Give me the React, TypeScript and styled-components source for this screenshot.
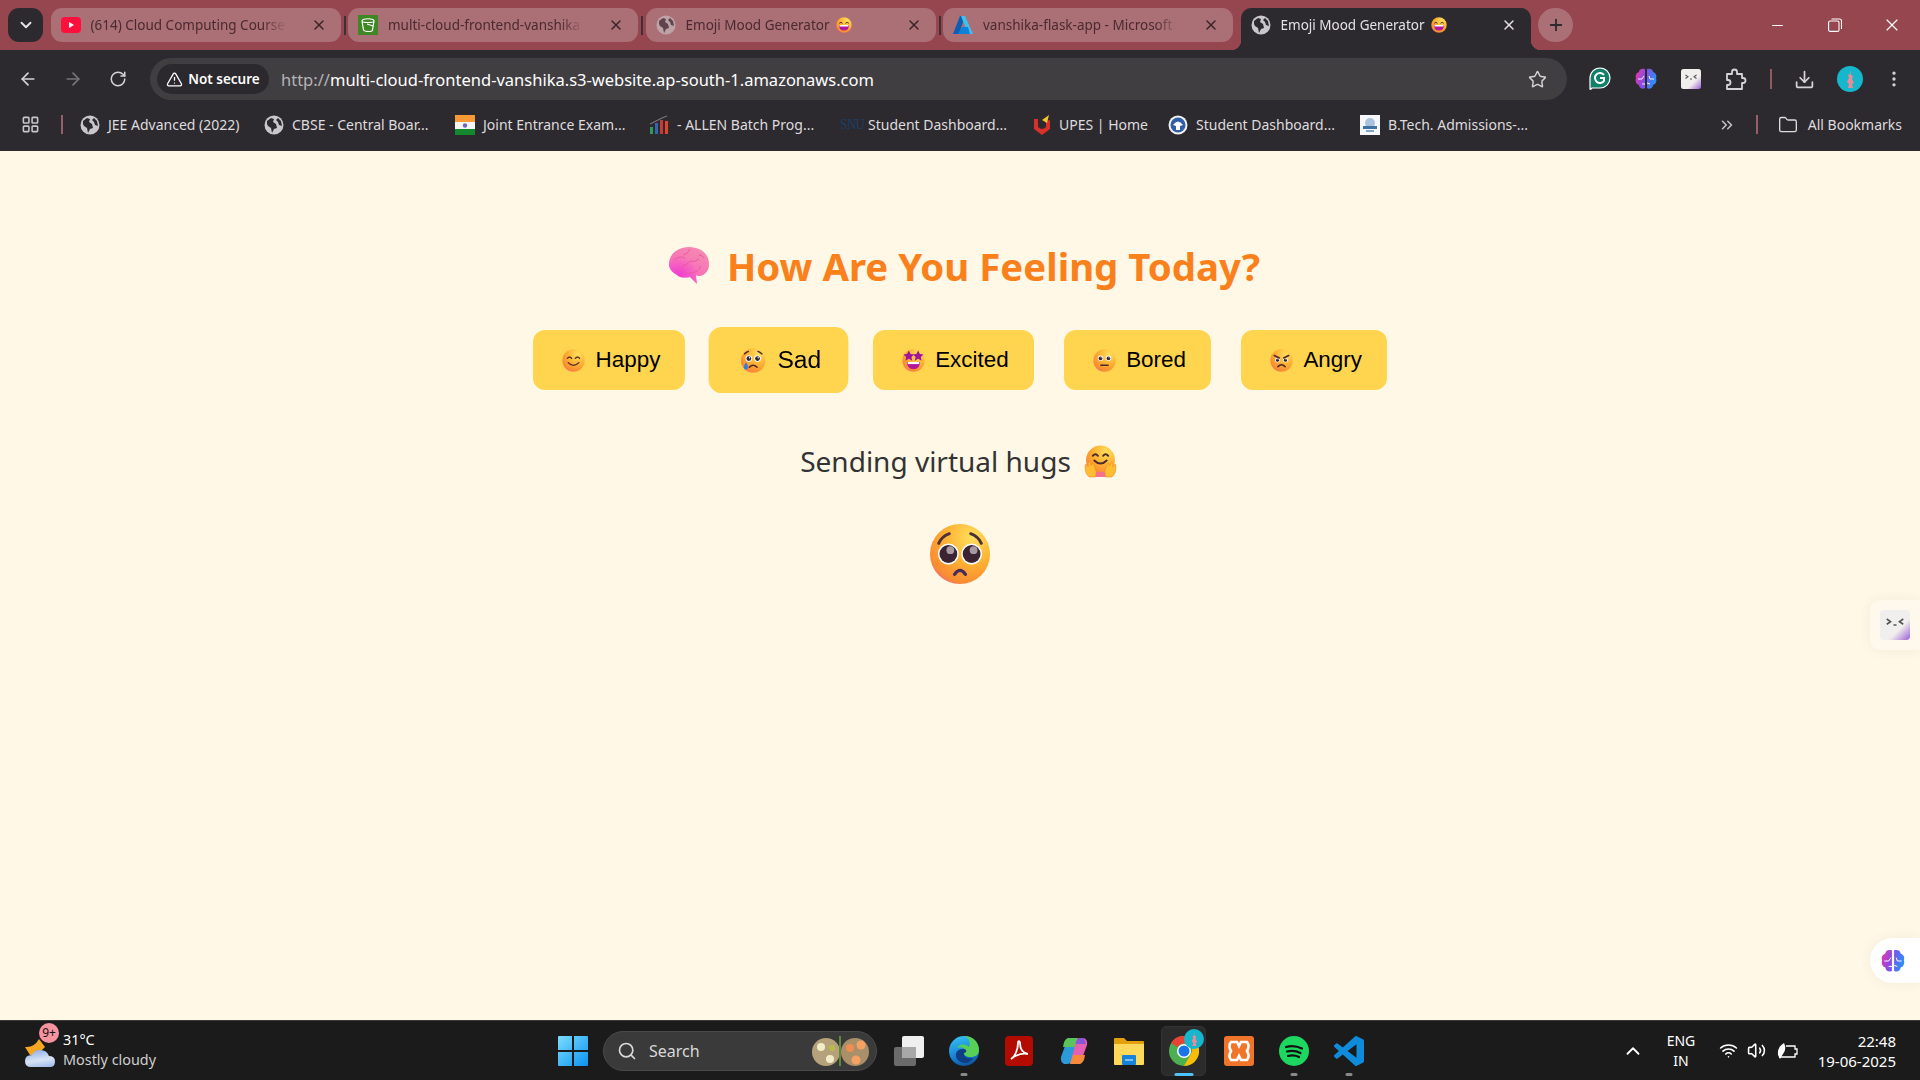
import {ReactNode, useId} from 'react';
import styled, {createGlobalStyle} from 'styled-components';
import {ArrowLeft, ArrowRight, ChevronDown, ChevronUp, ChevronsRight, Download, EllipsisVertical, Folder, LayoutGrid, Minus, Plus, RotateCw, Search, Star, TriangleAlert, Volume2, Wifi, X} from 'lucide-react';

const UI_FONT = '"Noto Sans", "Open Sans", sans-serif';

const GlobalStyle = createGlobalStyle`
  html, body {
    margin: 0;
    height: 100%;
    overflow: hidden;
    font-family: ${UI_FONT};
  }
  * { box-sizing: border-box; }
`;

type Mood = 'happy' | 'sad' | 'excited' | 'bored' | 'angry' | 'pleading' | 'hug' | 'grin';

const Emoji = ({mood, size}: {mood: Mood; size: number}) => {
  const id = useId();
  const eye = (x: number, y: number, r = 2.4) => (
    <>
      <circle cx={x} cy={y} r={r + 1.2} fill="#fff" />
      <circle cx={x} cy={y} r={r} fill="#33212e" />
      <circle cx={x + r * 0.3} cy={y - r * 0.35} r={r * 0.3} fill="#fff" />
    </>
  );
  return (
    <svg width={size} height={size} viewBox="0 0 32 32" style={{flexShrink: 0}}>
      <defs>
        <radialGradient id={id} cx="0.7" cy="0.22" r="0.92">
          <stop offset="0" stopColor="#ffdf5c" />
          <stop offset="0.5" stopColor="#fdb032" />
          <stop offset="0.85" stopColor="#f98a33" />
          <stop offset="1" stopColor="#ee5ca8" />
        </radialGradient>
      </defs>
      {mood === 'hug' && <circle cx="16" cy="14.500" r="14" fill={`url(#${id})`} />}
      {mood !== 'hug' && <circle cx="16" cy="16" r="15.500" fill={`url(#${id})`} />}
      {mood === 'happy' && (
        <g fill="none" stroke="#4b2a2a" strokeWidth="1.800" strokeLinecap="round">
          <path d="M7.500 13q3-3.500 6 0M18.500 13q3-3.500 6 0" />
          <path d="M8.500 19q7.500 7.500 15 0" />
        </g>
      )}
      {mood === 'grin' && (
        <>
          <path d="M7 12q3-3 5.500 0M19.500 12q3-3 5.500 0" fill="none" stroke="#4b2a2a" strokeWidth="2" strokeLinecap="round" />
          <path d="M6 16h20q0 11-10 11T6 16z" fill="#b4189c" />
          <path d="M7 16h18v3H7z" fill="#fff" />
        </>
      )}
      {mood === 'sad' && (
        <>
          {eye(10.500, 13.500, 3)}
          {eye(21.500, 13.500, 3)}
          <path d="M5 7.500q2.500-2 5-3M27 7.500q-2.500-2-5-3M11 24.500q5-5 10 0" fill="none" stroke="#4b2a2a" strokeWidth="1.800" strokeLinecap="round" />
          <path d="M7 18q3 4 2.500 8-4 3-5.500-1 0-3 3-7z" fill="#2f7fe0" />
        </>
      )}
      {mood === 'excited' && (
        <>
          <path d="M9.500 2l2.400 5 5 .6-3.700 3.400 1 5.200-4.700-2.600-4.700 2.600 1-5.200L2 7.600 7 7z" fill="#a3149d" />
          <path d="M22.500 2l2.400 5 5 .6-3.700 3.400 1 5.200-4.700-2.600-4.700 2.600 1-5.200L15 7.600 20 7z" fill="#a3149d" />
          <path d="M7 18h18q0 10-9 10T7 18z" fill="#b4189c" />
          <path d="M8 18h16v3H8z" fill="#fff" />
        </>
      )}
      {mood === 'bored' && (
        <>
          {eye(10.500, 13, 2.600)}
          {eye(21.500, 13, 2.600)}
          <path d="M11 22.500h10" stroke="#4b2a2a" strokeWidth="2" strokeLinecap="round" />
        </>
      )}
      {mood === 'angry' && (
        <>
          {eye(10.500, 15.500, 2.200)}
          {eye(21.500, 15.500, 2.200)}
          <path d="M6 9l7 3.500M26 9l-7 3.500M11 24.500q5-5 10 0" fill="none" stroke="#4b2a2a" strokeWidth="2.200" strokeLinecap="round" />
        </>
      )}
      {mood === 'pleading' && (
        <>
          <path d="M5 10.500q1.500-3.500 5.500-5M27 10.500q-1.500-3.500-5.500-5" fill="none" stroke="#4b3038" strokeWidth="1.500" strokeLinecap="round" />
          <circle cx="10" cy="16" r="5.400" fill="#fff" />
          <circle cx="22" cy="16" r="5.400" fill="#fff" />
          <circle cx="10" cy="16" r="4.600" fill="#3a2433" />
          <circle cx="22" cy="16" r="4.600" fill="#3a2433" />
          <circle cx="11" cy="14" r="2" fill="#a79aa0" />
          <circle cx="23" cy="14" r="2" fill="#a79aa0" />
          <path d="M13.200 26.500q2.800-4 5.600 0" fill="none" stroke="#4a2a5a" strokeWidth="1.700" strokeLinecap="round" />
        </>
      )}
      {mood === 'hug' && (
        <>
          <path d="M8.500 10.500q2.500-3 5 0M18.500 10.500q2.500-3 5 0M10 15q6 6 12 0" fill="none" stroke="#4b2a2a" strokeWidth="1.800" strokeLinecap="round" />
          <path d="M11 26h10v5H11z" fill="#f6708f" />
          <path d="M1 21q0-3 1.500-2l1.500 2V17q1.500-1 2 0l1 3 1-2q1.500 0 1.500 1L12 26l-1 5H5q-4-3-4-10zM31 21q0-3-1.500-2L28 21v-4q-1.500-1-2 0l-1 3-1-2q-1.500 0-1.500 1L20 26l1 5h6q4-3 4-10z" fill="#ffbd33" stroke="#f08a2c" strokeWidth="0.600" />
        </>
      )}
    </svg>
  );
};

const BRAIN_PATH =
  'M1 19C0 8 9 0 21 0c12 0 20 7 20 17 0 7-4 11-9 12-1 0-3 0-4-1l1 9-7-7c-5 1-10 1-13-2-4-2-7-5-8-9z';

const BrainEmoji = () => {
  const id = useId();
  const shade = useId();
  return (
    <svg width="42" height="38" viewBox="0 0 42 38" style={{flexShrink: 0}}>
      <defs>
        <linearGradient id={id} x1="0.7" y1="0" x2="0.2" y2="1">
          <stop offset="0" stopColor="#f58ab0" />
          <stop offset="0.6" stopColor="#f870b8" />
          <stop offset="1" stopColor="#f54cd0" />
        </linearGradient>
        <radialGradient id={shade} cx="0.25" cy="0.75" r="0.5">
          <stop offset="0" stopColor="#f038d8" stopOpacity="0.8" />
          <stop offset="1" stopColor="#f038d8" stopOpacity="0" />
        </radialGradient>
      </defs>
      <path d={BRAIN_PATH} fill={`url(#${id})`} />
      <path d={BRAIN_PATH} fill={`url(#${shade})`} />
      <path d="M6 13q6-5 11-2M22 2q-2 5-7 6M31 12q-5 4-9 2-3 4-8 5M13 20q1 6 9 6 8 0 11-7M36 11q-2-3-5-3" fill="none" stroke="#e4589c" strokeWidth="0.900" />
    </svg>
  );
};

const Globe = ({size = 20, base = '#c9c7ca', land = '#2d2a2f'}: {size?: number; base?: string; land?: string}) => (
  <svg width={size} height={size} viewBox="0 0 20 20" style={{flexShrink: 0}}>
    <circle cx="10" cy="10" r="9.500" fill={base} />
    <path d="M3 6l4-3 3 1-1 3 3 2 1 4-3 1-2 4-1-5-3-2-1-2zM14 3l3 3 1 5-3-1-1-3-2-2z" fill={land} />
  </svg>
);

const YouTubeIcon = () => (
  <svg width="20" height="16" viewBox="0 0 20 16" style={{flexShrink: 0}}>
    <rect width="20" height="16" rx="4" fill="#ff0f3c" />
    <path d="M8 5l5 3-5 3z" fill="#fff" />
  </svg>
);

const BucketIcon = () => (
  <svg width="20" height="20" viewBox="0 0 20 20" style={{flexShrink: 0}}>
    <rect width="20" height="20" fill="#3f8624" />
    <path d="M4 6c0-3 12-3 12 0l-1.500 9c0 2-7.500 2-9 0zM4 6c0 2 12 2 12 0M9 9l6 2" fill="none" stroke="#fff" strokeWidth="1.200" />
  </svg>
);

const AzureIcon = () => (
  <svg width="20" height="20" viewBox="0 0 20 20" style={{flexShrink: 0}}>
    <path d="M7 1h5L6 19H0z" fill="#0a5fb4" />
    <path d="M12 1h-4l7 18h5z" fill="#3cc1f0" />
    <path d="M9 12h6l2 7H5z" fill="#1081d8" />
  </svg>
);

const IndiaFlag = () => (
  <svg width="20" height="20" viewBox="0 0 20 20" style={{flexShrink: 0}}>
    <rect width="20" height="7" fill="#f79a36" />
    <rect y="7" width="20" height="7" fill="#f4f4f4" />
    <rect y="14" width="20" height="6" fill="#14882e" />
    <circle cx="10" cy="10.500" r="2.200" fill="#6b6bb5" />
  </svg>
);

const AllenIcon = () => (
  <svg width="20" height="20" viewBox="0 0 20 20" style={{flexShrink: 0}}>
    <path d="M1 12h3v7H1z" fill="#2d9c57" />
    <path d="M6 8h3v11H6z" fill="#3466b0" />
    <path d="M11 5h3v14h-3z" fill="#c73a3a" />
    <path d="M16 6h3v13h-3z" fill="#e0452c" />
    <path d="M1 9l12-6 5-2" stroke="#777" strokeWidth="1.200" fill="none" />
  </svg>
);

const UpesIcon = () => (
  <svg width="18" height="20" viewBox="0 0 18 20" style={{flexShrink: 0}}>
    <path d="M1 4h4v8q4 4 8 0V6l4-1v9l-8 6-8-6z" fill="#d9302c" />
    <path d="M9 5l7-5-2 8z" fill="#f5c32c" />
  </svg>
);

const CollegeIcon = () => (
  <svg width="20" height="20" viewBox="0 0 20 20" style={{flexShrink: 0}}>
    <circle cx="10" cy="10" r="9.500" fill="#f2f2ee" />
    <circle cx="10" cy="10" r="7.500" fill="#2f5fa8" />
    <path d="M5 10q5-7 10 0l-3 1v4H8v-4z" fill="#fff" />
  </svg>
);

const AdmissionIcon = () => (
  <svg width="20" height="20" viewBox="0 0 20 20" style={{flexShrink: 0}}>
    <rect width="20" height="20" fill="#f6f8fb" />
    <circle cx="10" cy="8" r="5" fill="#a9c3de" />
    <path d="M3 11h14v3H3z" fill="#3f73a8" />
    <path d="M6 15h8v2H6z" fill="#7fa5c9" />
  </svg>
);

const GrammarlyIcon = () => (
  <svg width="22" height="24" viewBox="0 0 22 24">
    <path d="M11 1a10 10 0 0 1 10 10 10 10 0 0 1-10 10H3q-2 2-2 1V11A10 10 0 0 1 11 1z" fill="#11806a" stroke="#fff" strokeWidth="1.200" />
    <path d="M15 8a5 5 0 1 0 0 6v-3h-4" fill="none" stroke="#fff" strokeWidth="2" />
  </svg>
);

const ColorBrain = ({size = 20}: {size?: number}) => {
  const id = useId();
  return (
    <svg width={size} height={size} viewBox="0 0 24 24">
      <defs>
        <linearGradient id={id} x1="0" x2="1" y1="0" y2="0.300">
          <stop offset="0" stopColor="#f0359c" />
          <stop offset="0.5" stopColor="#8b4bea" />
          <stop offset="1" stopColor="#2f8df5" />
        </linearGradient>
      </defs>
      <path d="M11 2C7 1 5 3 5 5 2 6 1 9 2 11c-1 3 0 6 3 7 0 3 4 5 6 3zM13 2c4-1 6 1 6 3 3 1 4 4 3 6 1 3 0 6-3 7 0 3-4 5-6 3z" fill={`url(#${id})`} />
      <path d="M4 12h4l2-3M20 12h-4l-1-3M8 17h3M16 17l-3-1" fill="none" stroke="#fff" strokeWidth="0.900" />
    </svg>
  );
};

const FaceIcon = ({size = 20}: {size?: number}) => {
  const id = useId();
  return (
    <svg width={size} height={size} viewBox="0 0 20 20">
      <defs>
        <linearGradient id={id} x1="0.2" y1="0.2" x2="1" y2="1">
          <stop offset="0.55" stopColor="#f1efed" />
          <stop offset="1" stopColor="#9c5fd6" />
        </linearGradient>
      </defs>
      <rect width="20" height="20" rx="2.500" fill={`url(#${id})`} />
      <path d="M4.500 6l2.500 1.800-2.500 1.700M15.500 6L13 7.800l2.500 1.700M9 10h2" fill="none" stroke="#555" strokeWidth="1.100" />
    </svg>
  );
};

const PuzzleIcon = () => (
  <svg width="22" height="24" viewBox="0 0 22 24">
    <path d="M2 7h5V5a2.500 2.500 0 0 1 5 0v2h5v4h1a2.500 2.500 0 0 1 0 5h-1v6H2v-4h1a2.500 2.500 0 0 0 0-5H2z" fill="none" stroke="#d6d3d6" strokeWidth="1.800" strokeLinejoin="round" />
  </svg>
);

const RestoreIcon = () => (
  <svg width="14" height="14" viewBox="0 0 14 14">
    <rect x="0.600" y="3" width="10.400" height="10.400" rx="1.500" fill="none" stroke="currentColor" strokeWidth="1.100" />
    <path d="M3.500 1h8q2 0 2 2v8" fill="none" stroke="currentColor" strokeWidth="1.100" />
  </svg>
);

const Avatar = ({size = 26}: {size?: number}) => (
  <svg width={size} height={size} viewBox="0 0 26 26">
    <circle cx="13" cy="13" r="13" fill="#16b6cc" />
    <path d="M13 4l1 5 2 1-1 3 2 4-2 1 1 4h-5l1-4-2-2 2-4-1-3 2-1z" fill="#ee8a96" />
  </svg>
);

const StartIcon = () => {
  const id = useId();
  return (
    <svg width="30" height="30" viewBox="0 0 30 30">
      <defs>
        <linearGradient id={id} x1="0" y1="0" x2="1" y2="1">
          <stop offset="0" stopColor="#7ddcff" />
          <stop offset="1" stopColor="#0a94f0" />
        </linearGradient>
      </defs>
      <path d="M0 1q0-1 1-1h13v14H0zM16 0h13q1 0 1 1v13H16zM0 16h14v14H1q-1 0-1-1zM16 16h14v13q0 1-1 1H16z" fill={`url(#${id})`} />
    </svg>
  );
};

const TaskViewIcon = () => (
  <svg width="30" height="30" viewBox="0 0 30 30">
    <rect x="0" y="11" width="22" height="19" rx="2" fill="#6b6b6b" />
    <rect x="8" y="0" width="22" height="22" rx="2" fill="#f0f0f0" />
    <rect x="8" y="11" width="14" height="11" fill="#a8a8a8" />
  </svg>
);

const EdgeIcon = () => {
  const id = useId();
  return (
    <svg width="30" height="32" viewBox="0 0 30 32">
      <defs>
        <linearGradient id={id} x1="0.2" y1="0" x2="0.5" y2="1">
          <stop offset="0" stopColor="#35c1f1" />
          <stop offset="0.6" stopColor="#1a84d8" />
          <stop offset="1" stopColor="#0c59a4" />
        </linearGradient>
      </defs>
      <circle cx="15" cy="16" r="15" fill={`url(#${id})`} />
      <path d="M15 1c9 0 15 6 15 14 0 5-4 7-8 7-5 0-7-2-7-4 0-1 1-2 2-2-1-3-5-5-9-3C10 9 16 8 20 12 22 7 20 3 15 1z" fill="#58d058" />
      <path d="M8 24c-3-5 0-11 7-10 4 1 2 4 0 4-1 3 3 6 9 5-3 6-11 7-16 1z" fill="#0f3f82" />
    </svg>
  );
};

const AcrobatIcon = () => (
  <svg width="28" height="30" viewBox="0 0 28 30">
    <rect width="28" height="30" rx="4" fill="#b30b00" />
    <path d="M6 23c4-2 7-10 7-16 0-3 2-2 2 0 0 6 3 10 8 11-5-1-12 1-17 5z" fill="none" stroke="#fff" strokeWidth="1.800" />
  </svg>
);

const CopilotIcon = () => (
  <svg width="30" height="30" viewBox="0 0 30 30">
    <path d="M9 2h10l-6 22q-1 4-5 4H5q-4-2-3-7z" fill="#2a9bd8" />
    <path d="M9 2h10l-3 9H4q1-8 5-9z" fill="#5bc45a" />
    <path d="M21 28H11l6-22q1-4 5-4h3q4 2 3 7z" fill="#e65fb4" />
    <path d="M21 28H11l3-9h12q-1 8-5 9z" fill="#f78a3a" />
    <path d="M17 6q1-4 5-4h3l2 6H17z" fill="#8a55d8" />
  </svg>
);

const FilesIcon = () => (
  <svg width="30" height="30" viewBox="0 0 30 30">
    <path d="M0 3q0-1 1-1h9l3 3h16q1 0 1 1v6H0z" fill="#e2a00d" />
    <path d="M0 8h30v20q0 1-1 1H1q-1 0-1-1z" fill="#ffd85c" />
    <rect x="8" y="19" width="14" height="10" rx="1" fill="#1683d8" />
    <path d="M11 24h8" stroke="#9fd4fb" strokeWidth="1.500" />
  </svg>
);

const ChromeIcon = () => (
  <svg width="30" height="30" viewBox="0 0 30 30">
    <circle cx="15" cy="15" r="15" fill="#4caf50" />
    <path d="M15 0a15 15 0 0 1 13 7.500H15a7.500 7.500 0 0 0-6.500 3.750L2 7A15 15 0 0 1 15 0z" fill="#ea4335" />
    <path d="M28 7.500A15 15 0 0 1 15 30l6.500-11.250A7.500 7.500 0 0 0 22 10z" fill="#fbbc05" />
    <circle cx="15" cy="15" r="7" fill="#fff" />
    <circle cx="15" cy="15" r="5.500" fill="#1a73e8" />
  </svg>
);

const XamppIcon = () => (
  <svg width="30" height="30" viewBox="0 0 30 30">
    <rect width="30" height="30" rx="3" fill="#f0742a" />
    <path d="M7 6h6l2 4 2-4h6q3 4 0 9 3 5 0 9h-6l-2-4-2 4H7q-3-4 0-9-3-5 0-9z" fill="none" stroke="#fff" strokeWidth="2.600" />
  </svg>
);

const SpotifyIcon = () => (
  <svg width="30" height="30" viewBox="0 0 30 30">
    <circle cx="15" cy="15" r="15" fill="#1ed760" />
    <path d="M7 11q8-2.500 16 1.500M8 15.500q7-2 13.500 1.500M9 20q6-1.500 11 1" fill="none" stroke="#121212" strokeWidth="2.200" strokeLinecap="round" />
  </svg>
);

const VsCodeIcon = () => (
  <svg width="30" height="30" viewBox="0 0 100 100">
    <path
      fillRule="evenodd"
      fill="#0f8bdc"
      d="M70.900 99.300a6.200 6.200 0 0 0 5-.2l20.600-9.900A6.200 6.200 0 0 0 100 83.600V16.400a6.200 6.200 0 0 0-3.500-5.600L75.900.9a6.200 6.200 0 0 0-7.100 1.200L29.400 38.100 12.200 25a4.200 4.200 0 0 0-5.300.2L1.400 30.300a4.200 4.200 0 0 0 0 6.200L16.300 50 1.400 63.500a4.200 4.200 0 0 0 0 6.200l5.500 5a4.200 4.200 0 0 0 5.300.2l17.200-13.100 39.400 36a6.200 6.200 0 0 0 2.100 1.500zM75 27.300 45.100 50 75 72.700z"
    />
  </svg>
);

const WeatherIcon = () => {
  const id = useId();
  return (
    <svg width="32" height="36" viewBox="0 0 32 36">
      <defs>
        <linearGradient id={id} x1="0.3" y1="0" x2="0.6" y2="1">
          <stop offset="0" stopColor="#8fb0e6" />
          <stop offset="0.6" stopColor="#d8e4f6" />
          <stop offset="1" stopColor="#a8c0ea" />
        </linearGradient>
      </defs>
      <path d="M1 14q9 1 14-8l6 8-8 8H6z" fill="#f5a623" />
      <path d="M7 34q-6 0-6-6t7-6q2-5 8-5 7 0 9 6 6 0 6 5.500T26 34z" fill={`url(#${id})`} />
    </svg>
  );
};

const SearchDoodle = () => (
  <svg width="58" height="36" viewBox="0 0 58 36">
    <circle cx="14" cy="19" r="14" fill="#b5a27a" />
    <circle cx="43" cy="19" r="14" fill="#a98f6a" />
    <circle cx="9" cy="14" r="4" fill="#f2edc9" />
    <circle cx="18" cy="26" r="4" fill="#f2edc9" />
    <circle cx="20" cy="15" r="3" fill="#b7bd43" />
    <path d="M28 3v30" stroke="#5c8a3a" strokeWidth="2" />
    <circle cx="49" cy="12" r="4.500" fill="#f4a264" />
    <circle cx="38" cy="15" r="4" fill="#ef8d52" />
    <circle cx="44" cy="27" r="4.500" fill="#f4a264" />
  </svg>
);

const BatteryIcon = () => (
  <svg width="22" height="18" viewBox="0 0 22 18">
    <path d="M9 4h9v3h2v5h-2v3H2" fill="none" stroke="#fff" strokeWidth="1.300" />
    <path d="M1 13Q0 5 7 1q3 6-1 11l-3 5z" fill="#fff" />
  </svg>
);

const Screen = styled.div`
  width: 1920px;
  height: 1080px;
  display: flex;
  flex-direction: column;
  overflow: hidden;
`;

/* browser chrome */

const TabStrip = styled.div`
  height: 50px;
  flex-shrink: 0;
  background: #96464f;
  display: flex;
  align-items: flex-start;
  padding: 8px 0 0 8px;
  gap: 7.500px;
`;

const TabListButton = styled.div`
  width: 35px;
  height: 34px;
  border-radius: 11px;
  background: #2d2a2f;
  color: #e6e3e6;
  display: flex;
  align-items: center;
  justify-content: center;
`;

const Tab = styled.div<{$active?: boolean; $divider?: boolean}>`
  position: relative;
  width: 290px;
  height: ${({$active}) => ($active ? '42px' : '34px')};
  padding: 0 14px 0 10px;
  display: flex;
  align-items: ${({$active}) => ($active ? 'flex-start' : 'center')};
  gap: 10px;
  border-radius: ${({$active}) => ($active ? '10px 10px 0 0' : '11px')};
  background: ${({$active}) => ($active ? '#2d2a2f' : '#ab6f76')};
  color: ${({$active}) => ($active ? '#e4e1e4' : '#4a2a30')};
  font-size: 13.500px;
  ${({$active}) =>
    $active &&
    `
      padding-top: 7px;
      &::before, &::after {
        content: '';
        position: absolute;
        bottom: 0;
        width: 10px;
        height: 10px;
      }
      &::before {
        left: -10px;
        background: radial-gradient(circle at 0 0, transparent 10px, #2d2a2f 10.500px);
      }
      &::after {
        right: -10px;
        background: radial-gradient(circle at 100% 0, transparent 10px, #2d2a2f 10.500px);
      }
    `}
  ${({$divider}) =>
    $divider &&
    `
      &::after {
        content: '';
        position: absolute;
        right: -5px;
        top: 8px;
        height: 19px;
        width: 2px;
        background: #3a3237;
      }
    `}
`;

const FaviconSlot = styled.span<{$dim?: boolean}>`
  width: 20px;
  height: 20px;
  display: flex;
  align-items: center;
  justify-content: center;
  opacity: ${({$dim}) => ($dim ? 0.6 : 1)};
  flex-shrink: 0;
`;

const TabTitle = styled.span`
  flex: 1;
  min-width: 0;
  height: 20px;
  line-height: 20px;
  margin-right: 14px;
  white-space: nowrap;
  display: flex;
  align-items: center;
  gap: 6px;
  -webkit-mask-image: linear-gradient(to left, transparent 0, #000 24px);
  mask-image: linear-gradient(to left, transparent 0, #000 24px);
`;

const TabClose = styled.span`
  display: flex;
  flex-shrink: 0;
  height: 20px;
  align-items: center;
`;

const NewTabButton = styled.div`
  width: 35px;
  height: 34px;
  border-radius: 17px;
  background: #ab6f76;
  color: #2d2a2f;
  display: flex;
  align-items: center;
  justify-content: center;
`;

const WindowControls = styled.div`
  margin-left: auto;
  margin-top: -8px;
  display: flex;
  color: #fff;
`;

const WindowButton = styled.div`
  width: 57px;
  height: 50px;
  display: flex;
  align-items: center;
  justify-content: center;
`;

const Toolbar = styled.div`
  height: 50px;
  flex-shrink: 0;
  background: #2d2a2f;
  display: flex;
  align-items: flex-start;
  padding: 8px 0 0 0;
`;

const NavButton = styled.div<{$dim?: boolean; $w: number}>`
  width: ${({$w}) => $w}px;
  height: 42px;
  display: flex;
  align-items: center;
  justify-content: center;
  color: ${({$dim}) => ($dim ? '#77747a' : '#d6d3d6')};
  flex-shrink: 0;
`;

const AddressBar = styled.div`
  width: 1417px;
  height: 42px;
  margin-left: 5px;
  border-radius: 21px;
  background: #413e42;
  display: flex;
  align-items: center;
  padding: 0 20px 0 7px;
  margin-right: 10px;
`;

const SecurityPill = styled.div`
  width: 112px;
  height: 30px;
  border-radius: 15px;
  background: #2c292e;
  color: #fff;
  font-size: 13.500px;
  font-weight: 600;
  display: flex;
  align-items: center;
  justify-content: center;
  gap: 5px;
  margin-right: 12px;
`;

const UrlText = styled.span`
  font-size: 16.500px;
  color: #fff;
  flex: 1;
  white-space: nowrap;
`;

const UrlScheme = styled.span`
  color: #b5b2b6;
`;

const ToolbarSeparator = styled.div`
  width: 2px;
  height: 20px;
  margin: 11px 15px 0 11px;
  background: #8f5a60;
`;

const BookmarkBar = styled.div`
  height: 51px;
  flex-shrink: 0;
  background: #2d2a2f;
  display: flex;
  align-items: center;
  padding-bottom: 2px;
  color: #dedbde;
  font-size: 14px;
`;

const AppsButton = styled.div`
  width: 61px;
  padding-left: 21px;
  color: #c8c5c8;
  display: flex;
`;

const BarDivider = styled.div<{$mx: number}>`
  width: 2px;
  height: 19px;
  background: #96606a;
  margin: 0 ${({$mx}) => $mx}px;
  flex-shrink: 0;
`;

const BookmarkList = styled.div`
  display: flex;
  align-items: center;
  margin-left: 17px;
`;

const Bookmark = styled.div<{$w: number}>`
  width: ${({$w}) => $w}px;
  display: flex;
  align-items: center;
  gap: 8px;
  white-space: nowrap;
`;

const SnuLogo = styled.span`
  font-family: "Liberation Serif", serif;
  font-size: 15px;
  letter-spacing: -0.500px;
  color: #1e3f6e;
  width: 20px;
  transform: scaleX(0.85);
  transform-origin: left;
`;

const MoreBookmarks = styled.div`
  margin-left: auto;
  color: #c8c5c8;
  display: flex;
`;

const AllBookmarks = styled.div`
  display: flex;
  align-items: center;
  gap: 10px;
  padding-right: 18px;
  color: #dedbde;
`;

/* page content */

const Page = styled.main`
  position: relative;
  flex: 1;
  background: #fff8e7;
  display: flex;
  flex-direction: column;
  align-items: center;
  padding-top: 88px;
`;

const Heading = styled.h1`
  margin: 0;
  height: 54px;
  padding-left: 8px;
  display: flex;
  align-items: center;
  gap: 17px;
  font-size: 38.400px;
  font-weight: 700;
  color: #f9801b;
`;

const MoodRow = styled.div`
  display: flex;
  gap: 30px;
  margin-top: 37px;
`;

const MoodButton = styled.button<{$hovered?: boolean}>`
  height: 60px;
  padding: 0 25px;
  border: none;
  border-radius: 12px;
  background: #ffd54f;
  color: #000;
  font-family: "Liberation Sans", Arial, sans-serif;
  font-size: 22.400px;
  display: inline-flex;
  align-items: center;
  gap: 10.500px;
  transform: ${({$hovered}) => ($hovered ? 'scale(1.1)' : 'none')};
  & > svg { margin-left: 4px; }
`;

const Message = styled.p`
  margin: 49px 0 0;
  height: 44px;
  padding-right: 3px;
  display: flex;
  align-items: center;
  gap: 13px;
  font-size: 28px;
  color: #333;
`;

const BigEmoji = styled.div`
  margin-top: 40px;
  height: 62px;
`;

const SideWidget = styled.div<{$top: number; $h: number; $round: number; $bg: string}>`
  position: absolute;
  right: 0;
  top: ${({$top}) => $top}px;
  width: 50px;
  height: ${({$h}) => $h}px;
  border-radius: ${({$round}) => `${$round}px 0 0 ${$round}px`};
  background: ${({$bg}) => $bg};
  box-shadow: 0 0 12px rgba(120, 90, 40, 0.08);
  display: flex;
  align-items: center;
  padding-left: 10px;
`;

/* taskbar */

const Taskbar = styled.footer`
  height: 60px;
  flex-shrink: 0;
  background: #1b1b1b;
  border-top: 1px solid #3a3a3a;
  display: flex;
  align-items: center;
  color: #fff;
  font-size: 14.400px;
`;

const WeatherWidget = styled.div`
  position: relative;
  width: 558px;
  padding-left: 24px;
  display: flex;
  align-items: center;
  gap: 7px;
  flex-shrink: 0;
`;

const WeatherBadge = styled.span`
  position: absolute;
  left: 39px;
  top: -8px;
  width: 20px;
  height: 20px;
  border-radius: 50%;
  background: #f5939f;
  color: #111;
  font-size: 12px;
  text-align: center;
  line-height: 20px;
`;

const WeatherText = styled.div`
  line-height: 20px;
  margin-top: -1px;
`;

const WeatherSub = styled.div`
  color: #cfcfcf;
`;

const StartButton = styled.div`
  width: 45px;
  display: flex;
  flex-shrink: 0;
`;

const SearchBox = styled.div`
  width: 274px;
  height: 40px;
  flex-shrink: 0;
  border-radius: 20px;
  background: #3a3a3a;
  border: 1px solid #4a4a4a;
  color: #d8d8d8;
  display: flex;
  align-items: center;
  padding: 0 6px 0 13px;
  gap: 12px;
  font-size: 16px;
  margin-right: 4px;
`;

const SearchLabel = styled.span`
  flex: 1;
`;

const TaskApp = styled.div<{$active?: boolean; $running?: boolean}>`
  position: relative;
  width: 55px;
  height: 50px;
  flex-shrink: 0;
  display: flex;
  align-items: center;
  justify-content: center;
  ${({$active}) =>
    $active &&
    `
      &::before {
        content: '';
        position: absolute;
        inset: 0 5px;
        background: #2b2b2b;
        border: 1px solid #333;
        border-radius: 5px;
      }
      & > svg { position: relative; }
    `}
  ${({$running, $active}) =>
    ($running || $active) &&
    `
      &::after {
        content: '';
        position: absolute;
        bottom: 0;
        left: 50%;
        transform: translateX(-50%);
        width: ${$active ? '19px' : '7px'};
        height: 3px;
        border-radius: 2px;
        background: ${$active ? '#4fc3f7' : '#8a8a8a'};
      }
    `}
`;

const ChromeBadge = styled.span`
  position: absolute;
  right: 7px;
  top: 3px;
  display: flex;
`;

const Tray = styled.div`
  margin-left: auto;
  display: flex;
  align-items: center;
`;

const TrayIcon = styled.div<{$w: number}>`
  width: ${({$w}) => $w}px;
  display: flex;
  justify-content: center;
  align-items: center;
`;

const Lang = styled.div`
  width: 66px;
  text-align: center;
  line-height: 20px;
  font-size: 14px;
`;

const Clock = styled.div`
  width: 114px;
  padding-right: 24px;
  text-align: right;
  line-height: 20px;
  font-size: 15px;
  white-space: nowrap;
`;

type TabData = {title: ReactNode; icon: ReactNode; dim?: boolean; divider?: boolean};

const tabs: TabData[] = [
  {title: '(614) Cloud Computing Course', icon: <YouTubeIcon />, divider: true},
  {title: 'multi-cloud-frontend-vanshika', icon: <BucketIcon />, divider: true},
  {
    title: (
      <>
        Emoji Mood Generator <Emoji mood="grin" size={16} />
      </>
    ),
    icon: <Globe />,
    dim: true,
    divider: true,
  },
  {title: 'vanshika-flask-app - Microsoft', icon: <AzureIcon />},
];

const bookmarks: {label: string; icon: ReactNode; w: number}[] = [
  {label: 'JEE Advanced (2022)', icon: <Globe />, w: 184},
  {label: 'CBSE - Central Boar...', icon: <Globe />, w: 191},
  {label: 'Joint Entrance Exam...', icon: <IndiaFlag />, w: 194},
  {label: '- ALLEN Batch Prog...', icon: <AllenIcon />, w: 191},
  {label: 'Student Dashboard...', icon: <SnuLogo>SNU</SnuLogo>, w: 193},
  {label: 'UPES | Home', icon: <UpesIcon />, w: 135},
  {label: 'Student Dashboard...', icon: <CollegeIcon />, w: 192},
  {label: 'B.Tech. Admissions-...', icon: <AdmissionIcon />, w: 170},
];

const moods: {mood: Mood; label: string; hovered?: boolean}[] = [
  {mood: 'happy', label: 'Happy'},
  {mood: 'sad', label: 'Sad', hovered: true},
  {mood: 'excited', label: 'Excited'},
  {mood: 'bored', label: 'Bored'},
  {mood: 'angry', label: 'Angry'},
];

export default function App() {
  return (
    <Screen>
      <GlobalStyle />
      <TabStrip>
        <TabListButton>
          <ChevronDown size={18} strokeWidth={2.500} />
        </TabListButton>
        {tabs.map((t, i) => (
          <Tab key={i} $divider={t.divider}>
            <FaviconSlot $dim={t.dim}>{t.icon}</FaviconSlot>
            <TabTitle>{t.title}</TabTitle>
            <TabClose>
              <X size={16} strokeWidth={2.200} color="#3a2428" />
            </TabClose>
          </Tab>
        ))}
        <Tab $active>
          <FaviconSlot>
            <Globe />
          </FaviconSlot>
          <TabTitle>
            Emoji Mood Generator <Emoji mood="grin" size={16} />
          </TabTitle>
          <TabClose>
            <X size={16} strokeWidth={2.200} color="#e4e1e4" />
          </TabClose>
        </Tab>
        <NewTabButton>
          <Plus size={18} strokeWidth={2.500} />
        </NewTabButton>
        <WindowControls>
          <WindowButton>
            <Minus size={17} strokeWidth={1.400} />
          </WindowButton>
          <WindowButton>
            <RestoreIcon />
          </WindowButton>
          <WindowButton>
            <X size={20} strokeWidth={1.400} />
          </WindowButton>
        </WindowControls>
      </TabStrip>
      <Toolbar>
        <NavButton $w={55}>
          <ArrowLeft size={20} />
        </NavButton>
        <NavButton $w={36} $dim>
          <ArrowRight size={20} />
        </NavButton>
        <NavButton $w={54}>
          <RotateCw size={18} />
        </NavButton>
        <AddressBar>
          <SecurityPill>
            <TriangleAlert size={17} strokeWidth={1.800} />
            Not secure
          </SecurityPill>
          <UrlText>
            <UrlScheme>http://</UrlScheme>multi-cloud-frontend-vanshika.s3-website.ap-south-1.amazonaws.com
          </UrlText>
          <Star size={19} strokeWidth={1.800} color="#d6d3d6" />
        </AddressBar>
        <NavButton $w={46}>
          <GrammarlyIcon />
        </NavButton>
        <NavButton $w={45}>
          <ColorBrain size={24} />
        </NavButton>
        <NavButton $w={45}>
          <FaceIcon />
        </NavButton>
        <NavButton $w={46}>
          <PuzzleIcon />
        </NavButton>
        <ToolbarSeparator />
        <NavButton $w={34}>
          <Download size={21} />
        </NavButton>
        <NavButton $w={58}>
          <Avatar />
        </NavButton>
        <NavButton $w={30}>
          <EllipsisVertical size={20} />
        </NavButton>
      </Toolbar>
      <BookmarkBar>
        <AppsButton>
          <LayoutGrid size={19} />
        </AppsButton>
        <BarDivider $mx={0} />
        <BookmarkList>
          {bookmarks.map((b, i) => (
            <Bookmark key={i} $w={b.w}>
              {b.icon}
              {b.label}
            </Bookmark>
          ))}
        </BookmarkList>
        <MoreBookmarks>
          <ChevronsRight size={18} />
        </MoreBookmarks>
        <BarDivider $mx={20} />
        <AllBookmarks>
          <Folder size={20} strokeWidth={1.600} />
          All Bookmarks
        </AllBookmarks>
      </BookmarkBar>
      <Page>
        <Heading>
          <BrainEmoji />
          How Are You Feeling Today?
        </Heading>
        <MoodRow>
          {moods.map((m) => (
            <MoodButton key={m.label} $hovered={m.hovered}>
              <Emoji mood={m.mood} size={23} />
              {m.label}
            </MoodButton>
          ))}
        </MoodRow>
        <Message>
          Sending virtual hugs
          <Emoji mood="hug" size={33} />
        </Message>
        <BigEmoji>
          <Emoji mood="pleading" size={62} />
        </BigEmoji>
        <SideWidget $top={449} $h={50} $round={10} $bg="#fef9ec">
          <FaceIcon size={30} />
        </SideWidget>
        <SideWidget $top={787} $h={45} $round={23} $bg="#ffffff">
          <ColorBrain size={26} />
        </SideWidget>
      </Page>
      <Taskbar>
        <WeatherWidget>
          <WeatherIcon />
          <WeatherBadge>9+</WeatherBadge>
          <WeatherText>
            31°C
            <WeatherSub>Mostly cloudy</WeatherSub>
          </WeatherText>
        </WeatherWidget>
        <StartButton>
          <StartIcon />
        </StartButton>
        <SearchBox>
          <Search size={20} />
          <SearchLabel>Search</SearchLabel>
          <SearchDoodle />
        </SearchBox>
        <TaskApp>
          <TaskViewIcon />
        </TaskApp>
        <TaskApp $running>
          <EdgeIcon />
        </TaskApp>
        <TaskApp>
          <AcrobatIcon />
        </TaskApp>
        <TaskApp>
          <CopilotIcon />
        </TaskApp>
        <TaskApp>
          <FilesIcon />
        </TaskApp>
        <TaskApp $active>
          <ChromeIcon />
          <ChromeBadge>
            <Avatar size={20} />
          </ChromeBadge>
        </TaskApp>
        <TaskApp>
          <XamppIcon />
        </TaskApp>
        <TaskApp $running>
          <SpotifyIcon />
        </TaskApp>
        <TaskApp $running>
          <VsCodeIcon />
        </TaskApp>
        <Tray>
          <TrayIcon $w={30}>
            <ChevronUp size={22} />
          </TrayIcon>
          <Lang>
            ENG
            <br />
            IN
          </Lang>
          <TrayIcon $w={28}>
            <Wifi size={19} />
          </TrayIcon>
          <TrayIcon $w={28}>
            <Volume2 size={19} />
          </TrayIcon>
          <TrayIcon $w={36}>
            <BatteryIcon />
          </TrayIcon>
          <Clock>
            22:48
            <br />
            19-06-2025
          </Clock>
        </Tray>
      </Taskbar>
    </Screen>
  );
}
